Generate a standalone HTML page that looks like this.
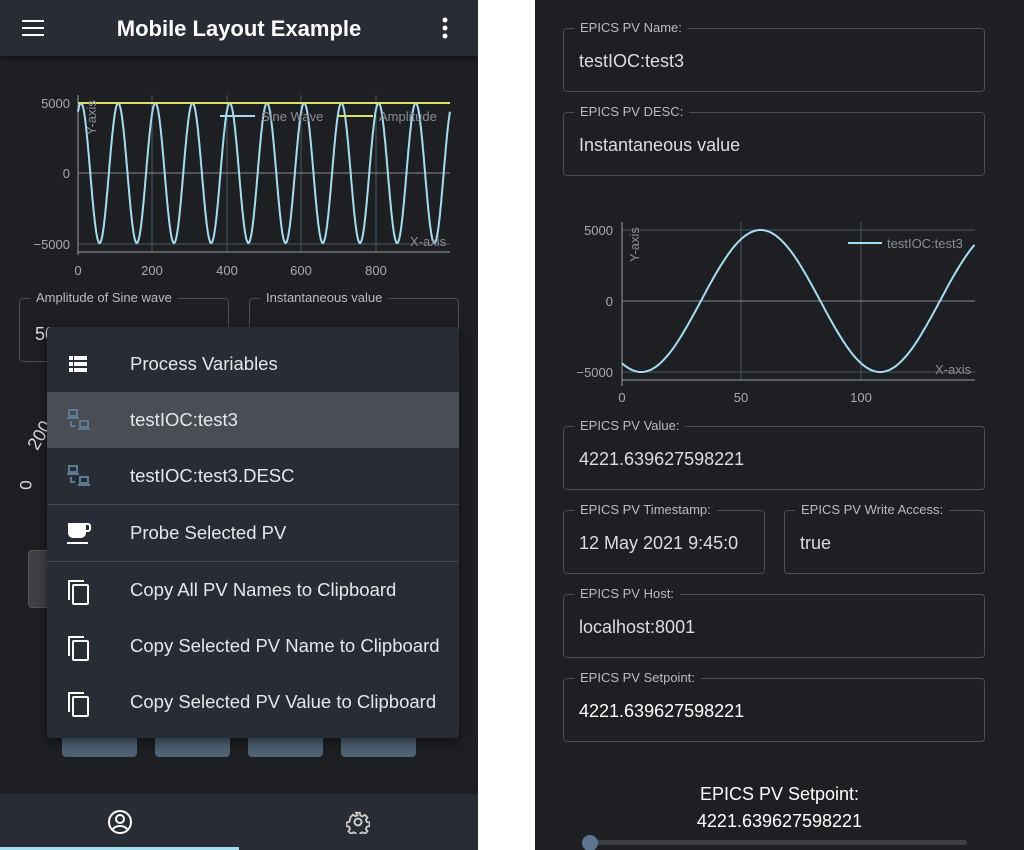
<!DOCTYPE html>
<html><head><meta charset="utf-8"><style>
*{box-sizing:border-box;margin:0;padding:0}
body{width:1024px;height:850px;background:#fff;font-family:"Liberation Sans",sans-serif;position:relative;overflow:hidden}
.p{position:absolute;top:0;height:850px;background:#1d1f23;overflow:hidden}
.a{position:absolute}
.fld{position:absolute;border:1px solid #4a4d52;border-radius:4px}
.fld .l{position:absolute;top:-9px;left:10px;padding:0 6px;background:#1d1f23;color:#b9bcc0;font-size:13px;line-height:16px;white-space:nowrap}
.fld .v{position:absolute;left:15px;top:22px;color:#dcdde0;font-size:18px;white-space:nowrap;overflow:hidden}
.mi{position:absolute;left:0;width:412px;height:56px;color:#e6e7ea;font-size:18.5px}
.mi span{position:absolute;left:83px;top:17px}
.mi svg{position:absolute;left:19px;top:16px}
.btn{position:absolute;top:738px;width:75px;height:19px;background:#4f6375;border-radius:0 0 4px 4px}
svg text{font-family:"Liberation Sans",sans-serif}
</style></head><body>
<div class="p" style="left:0;width:478px">
 <div class="a" style="left:0;top:0;width:478px;height:56px;background:#282c34;box-shadow:0 2px 6px rgba(0,0,0,.5)"></div>
 <svg class="a" style="left:22px;top:19px" width="22" height="18"><rect y="1" width="22" height="2" fill="#fff"/><rect y="8" width="22" height="2" fill="#fff"/><rect y="15" width="22" height="2" fill="#fff"/></svg>
 <div class="a" style="left:0;width:478px;top:16px;text-align:center;color:#fff;font-size:22px;font-weight:600">Mobile Layout Example</div>
 <svg class="a" style="left:440px;top:17px" width="10" height="22"><circle cx="5" cy="3" r="2.5" fill="#fff"/><circle cx="5" cy="11" r="2.5" fill="#fff"/><circle cx="5" cy="19" r="2.5" fill="#fff"/></svg>
 <svg class="a" style="left:0;top:80px" width="478" height="210" id="c1">
  <g stroke="#4b5a63" stroke-width="1"><line x1="152" y1="15" x2="152" y2="172"/><line x1="227" y1="15" x2="227" y2="172"/><line x1="301" y1="15" x2="301" y2="172"/><line x1="376" y1="15" x2="376" y2="172"/><line x1="78" y1="164" x2="450" y2="164"/></g>
  <line x1="78" y1="93" x2="450" y2="93" stroke="#888" />
  <line x1="78" y1="15" x2="78" y2="175" stroke="#999"/><line x1="78" y1="172" x2="450" y2="172" stroke="#999"/>
  <polyline id="s1" fill="none" stroke="#a6dcf0" stroke-width="2"/>
  <line x1="78" y1="23" x2="450" y2="23" stroke="#dbe06a" stroke-width="2"/>
  <line x1="220" y1="36" x2="255" y2="36" stroke="#a6dcf0" stroke-width="2"/><text x="261" y="41" fill="#8b8e92" font-size="13">Sine Wave</text>
  <line x1="338" y1="36" x2="373" y2="36" stroke="#dbe06a" stroke-width="2"/><text x="379" y="41" fill="#8b8e92" font-size="13">Amplitude</text>
  <text x="96" y="55" fill="#8b8e92" font-size="13" transform="rotate(-90 96 55)">Y-axis</text>
  <text x="410" y="166" fill="#8b8e92" font-size="13">X-axis</text>
  <g fill="#aaa" font-size="13" text-anchor="end"><text x="70" y="28">5000</text><text x="70" y="98">0</text><text x="70" y="169">−5000</text></g>
  <g fill="#aaa" font-size="13" text-anchor="middle"><text x="78" y="195">0</text><text x="152" y="195">200</text><text x="227" y="195">400</text><text x="301" y="195">600</text><text x="376" y="195">800</text></g>
 </svg>
 <div class="fld" style="left:19px;top:298px;width:210px;height:64px;"><div class="l">Amplitude of Sine wave</div><div class="v" style="top:25px">5000.000</div></div>
 <div class="fld" style="left:249px;top:298px;width:210px;height:64px;"><div class="l">Instantaneous value</div><div class="v" style="top:25px">4221.640</div></div>
 <div class="a" style="left:25px;top:425px;color:#ddd;font-size:18px;transform:rotate(-60deg)">200</div>
 <div class="a" style="left:22px;top:475px;color:#ddd;font-size:17px;transform:rotate(-90deg)">0</div>
 <div class="a" style="left:28px;top:550px;width:40px;height:58px;background:#3f4146;border:1px solid #555;border-radius:4px"></div>
 <div class="btn" style="left:62px"></div><div class="btn" style="left:155px"></div><div class="btn" style="left:248px"></div><div class="btn" style="left:341px"></div>
 <div class="a" style="left:47px;top:327px;width:412px;height:411px;background:#282c34;border-radius:4px;box-shadow:0 4px 12px rgba(0,0,0,.5)">
  <div class="mi" style="top:9px"><svg width="24" height="24" viewBox="0 0 24 24"><path d="M3 4h4v4H3zM8 4h13v4H8zM3 10h4v4H3zM8 10h13v4H8zM3 16h4v4H3zM8 16h13v4H8z" fill="#fff"/></svg><span>Process Variables</span></div>
  <div class="mi" style="top:65px;background:#4a4d54"><svg width="28" height="28" viewBox="0 0 28 28" fill="none" stroke="#5d7a92" stroke-width="2"><rect x="3" y="2" width="8" height="6"/><line x1="1" y1="10" x2="13" y2="10"/><path d="M5 13v5h4"/><rect x="14" y="13" width="8" height="6"/><line x1="12" y1="21" x2="24" y2="21"/></svg><span>testIOC:test3</span></div>
  <div class="mi" style="top:121px"><svg width="28" height="28" viewBox="0 0 28 28" fill="none" stroke="#5d7a92" stroke-width="2"><rect x="3" y="2" width="8" height="6"/><line x1="1" y1="10" x2="13" y2="10"/><path d="M5 13v5h4"/><rect x="14" y="13" width="8" height="6"/><line x1="12" y1="21" x2="24" y2="21"/></svg><span>testIOC:test3.DESC</span></div>
  <div class="a" style="left:0;top:177px;width:412px;height:1px;background:#44474d"></div>
  <div class="mi" style="top:178px"><svg width="26" height="26" viewBox="0 0 26 26"><path d="M2 2h18v10a5 5 0 0 1-5 5H7a5 5 0 0 1-5-5z" fill="#fff"/><path d="M19 3h3a2 2 0 0 1 2 2v3a2 2 0 0 1-2 2h-3" fill="none" stroke="#fff" stroke-width="2"/><rect x="1" y="21" width="21" height="2" fill="#fff"/></svg><span>Probe Selected PV</span></div>
  <div class="a" style="left:0;top:234px;width:412px;height:1px;background:#44474d"></div>
  <div class="mi" style="top:235px"><svg width="26" height="28" viewBox="0 0 26 28" fill="none" stroke="#fff" stroke-width="2"><path d="M3 22V3h15"/><rect x="7" y="7" width="15" height="19" rx="1"/></svg><span>Copy All PV Names to Clipboard</span></div>
  <div class="mi" style="top:291px"><svg width="26" height="28" viewBox="0 0 26 28" fill="none" stroke="#fff" stroke-width="2"><path d="M3 22V3h15"/><rect x="7" y="7" width="15" height="19" rx="1"/></svg><span>Copy Selected PV Name to Clipboard</span></div>
  <div class="mi" style="top:347px"><svg width="26" height="28" viewBox="0 0 26 28" fill="none" stroke="#fff" stroke-width="2"><path d="M3 22V3h15"/><rect x="7" y="7" width="15" height="19" rx="1"/></svg><span>Copy Selected PV Value to Clipboard</span></div>
 </div>
 <div class="a" style="left:0;top:794px;width:478px;height:56px;background:#282c34"></div>
 <div class="a" style="left:0;top:847px;width:239px;height:3px;background:#a6dcf0"></div>
 <svg class="a" style="left:107px;top:809px" width="26" height="26" viewBox="0 0 26 26" fill="none" stroke="#fff" stroke-width="2"><circle cx="13" cy="13" r="11"/><circle cx="13" cy="10" r="4"/><path d="M6 20c3-4 11-4 14 0"/></svg>
 <svg class="a" style="left:346px;top:810px" width="24" height="24" viewBox="0 0 24 24" fill="none" stroke="#ccc" stroke-width="2"><circle cx="12" cy="12" r="3.5"/><path d="M10 2h4l.6 3 2.3 1 2.6-1.7 2.8 2.8-1.7 2.6 1 2.3 3 .6v4l-3 .6-1 2.3 1.7 2.6-2.8 2.8-2.6-1.7-2.3 1-.6 3h-4l-.6-3-2.3-1-2.6 1.7-2.8-2.8 1.7-2.6-1-2.3-3-.6v-4l3-.6 1-2.3L3.8 6.9l2.8-2.8 2.6 1.7 2.3-1z" transform="scale(.92) translate(1 1)"/></svg>
</div>
<div class="p" style="left:535px;width:489px">
 <div class="fld" style="left:28px;top:28px;width:422px;height:64px"><div class="l">EPICS PV Name:</div><div class="v">testIOC:test3</div></div>
 <div class="fld" style="left:28px;top:112px;width:422px;height:64px"><div class="l">EPICS PV DESC:</div><div class="v">Instantaneous value</div></div>
 <svg class="a" style="left:0;top:200px" width="489" height="220">
  <g stroke="#4b5a63"><line x1="206" y1="22" x2="206" y2="180"/><line x1="326" y1="22" x2="326" y2="180"/><line x1="87" y1="30" x2="440" y2="30"/><line x1="87" y1="172" x2="440" y2="172"/></g>
  <line x1="87" y1="101" x2="440" y2="101" stroke="#888"/>
  <line x1="87" y1="22" x2="87" y2="186" stroke="#999"/><line x1="87" y1="180" x2="440" y2="180" stroke="#999"/>
  <polyline id="s2" fill="none" stroke="#a6dcf0" stroke-width="2"/>
  <line x1="313" y1="43" x2="347" y2="43" stroke="#a6dcf0" stroke-width="2"/><text x="352" y="48" fill="#8b8e92" font-size="13">testIOC:test3</text>
  <text x="104" y="62" fill="#8b8e92" font-size="13" transform="rotate(-90 104 62)">Y-axis</text>
  <text x="400" y="174" fill="#8b8e92" font-size="13">X-axis</text>
  <g fill="#aaa" font-size="13" text-anchor="end"><text x="78" y="35">5000</text><text x="78" y="106">0</text><text x="78" y="177">−5000</text></g>
  <g fill="#aaa" font-size="13" text-anchor="middle"><text x="87" y="202">0</text><text x="206" y="202">50</text><text x="326" y="202">100</text></g>
 </svg>
 <div class="fld" style="left:28px;top:426px;width:422px;height:64px"><div class="l">EPICS PV Value:</div><div class="v">4221.639627598221</div></div>
 <div class="fld" style="left:28px;top:510px;width:202px;height:64px"><div class="l">EPICS PV Timestamp:</div><div class="v" style="width:172px">12 May 2021 9:45:0</div></div>
 <div class="fld" style="left:249px;top:510px;width:201px;height:64px"><div class="l">EPICS PV Write Access:</div><div class="v">true</div></div>
 <div class="fld" style="left:28px;top:594px;width:422px;height:64px"><div class="l">EPICS PV Host:</div><div class="v">localhost:8001</div></div>
 <div class="fld" style="left:28px;top:678px;width:422px;height:64px"><div class="l">EPICS PV Setpoint:</div><div class="v" style="color:#fff">4221.639627598221</div></div>
 <div class="a" style="left:0;width:489px;top:781px;text-align:center;color:#fff;font-size:18px;line-height:27px">EPICS PV Setpoint:<br>4221.639627598221</div>
 <div class="a" style="left:50px;top:840px;width:382px;height:5px;border-radius:3px;background:#3c4046"></div>
 <div class="a" style="left:47px;top:835px;width:16px;height:16px;border-radius:50%;background:#5b7590"></div>
</div>
<script>
function pts(f,x0,x1,sx,ox,cy,a){var s=[];for(var x=x0;x<=x1;x+=0.5){s.push((ox+x*sx).toFixed(1)+","+(cy-a*f(x)).toFixed(1));}return s.join(" ");}
document.getElementById("s1").setAttribute("points",pts(function(x){return Math.sin(2*Math.PI*(x+17)/100)},0,1000,0.372,78,93,70));
document.getElementById("s2").setAttribute("points",pts(function(x){return Math.sin(2*Math.PI*(x-33)/100)},0,147.5,2.39,87,101,71));
</script>
</body></html>
